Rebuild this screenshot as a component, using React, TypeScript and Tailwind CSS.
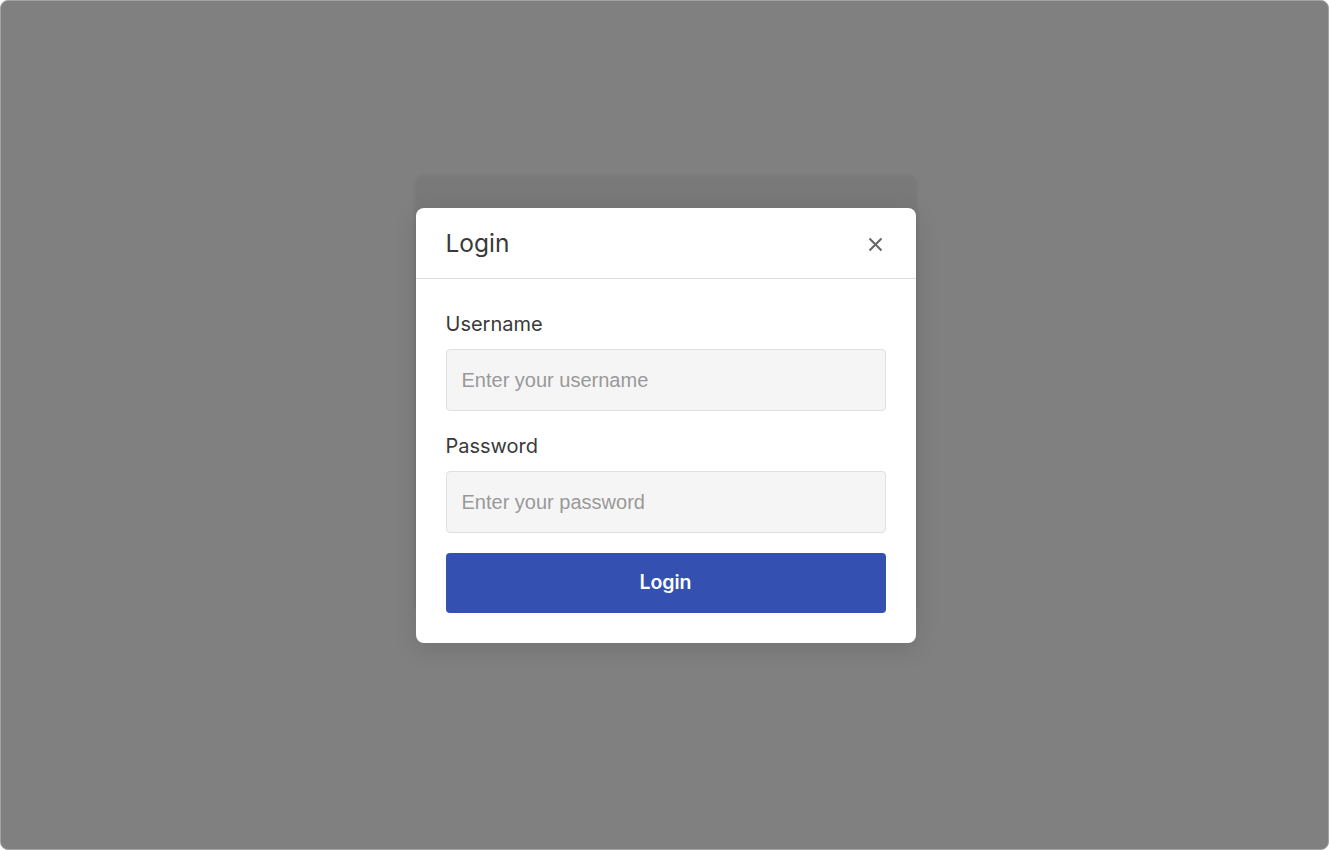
import React from "react";

export default function App() {
  return (
    <div className="w-[1329px] h-[850px] bg-white" style={{ fontFamily: "Inter, 'Noto Sans', sans-serif" }}>
      <div className="w-full h-full rounded-[8px] border border-[#a3a3a3] bg-[#808080] flex items-center justify-center">
        <div className="relative w-[500px] ml-[2px] bg-white rounded-[8px] shadow-[0_-31px_3px_2px_rgba(0,0,0,0.05),0_6px_24px_rgba(0,0,0,0.12)]">
          <div className="flex items-center justify-between h-[71px] px-[30px] border-b border-[#dedede]">
            <h2 className="text-[24.5px] leading-[30px] font-normal text-[#3a3a3a]">Login</h2>
            <button className="w-[20px] h-[20px] flex items-center justify-center mt-[4px]">
              <svg width="15" height="15" viewBox="0 0 15 15">
                <path d="M1.5 1.5 L13.5 13.5 M13.5 1.5 L1.5 13.5" stroke="#666" strokeWidth="2" strokeLinecap="butt" />
              </svg>
            </button>
          </div>
          <div className="px-[30px] pt-[30px] pb-[30px] flex flex-col">
            <label className="text-[20px] leading-[30px] font-normal text-[#3a3a3a] mb-[10px]">Username</label>
            <input
              type="text"
              placeholder="Enter your username"
              className="h-[62px] w-full bg-[#f5f5f5] border border-[#e0e0e0] rounded-[4px] px-[15px] pt-[1px] text-[20px] text-[#333] placeholder:text-[#999] outline-none mb-[20px]"
              style={{ fontFamily: "'Liberation Sans', Arial, sans-serif" }}
            />
            <label className="text-[20px] leading-[30px] font-normal text-[#3a3a3a] mb-[10px]">Password</label>
            <input
              type="password"
              placeholder="Enter your password"
              className="h-[62px] w-full bg-[#f5f5f5] border border-[#e0e0e0] rounded-[4px] px-[15px] pt-[1px] text-[20px] text-[#333] placeholder:text-[#999] outline-none mb-[20px]"
              style={{ fontFamily: "'Liberation Sans', Arial, sans-serif" }}
            />
            <button className="h-[60px] w-full bg-[#3451b2] rounded-[4px] text-white text-[19.5px] font-semibold">
              Login
            </button>
          </div>
        </div>
      </div>
    </div>
  );
}
